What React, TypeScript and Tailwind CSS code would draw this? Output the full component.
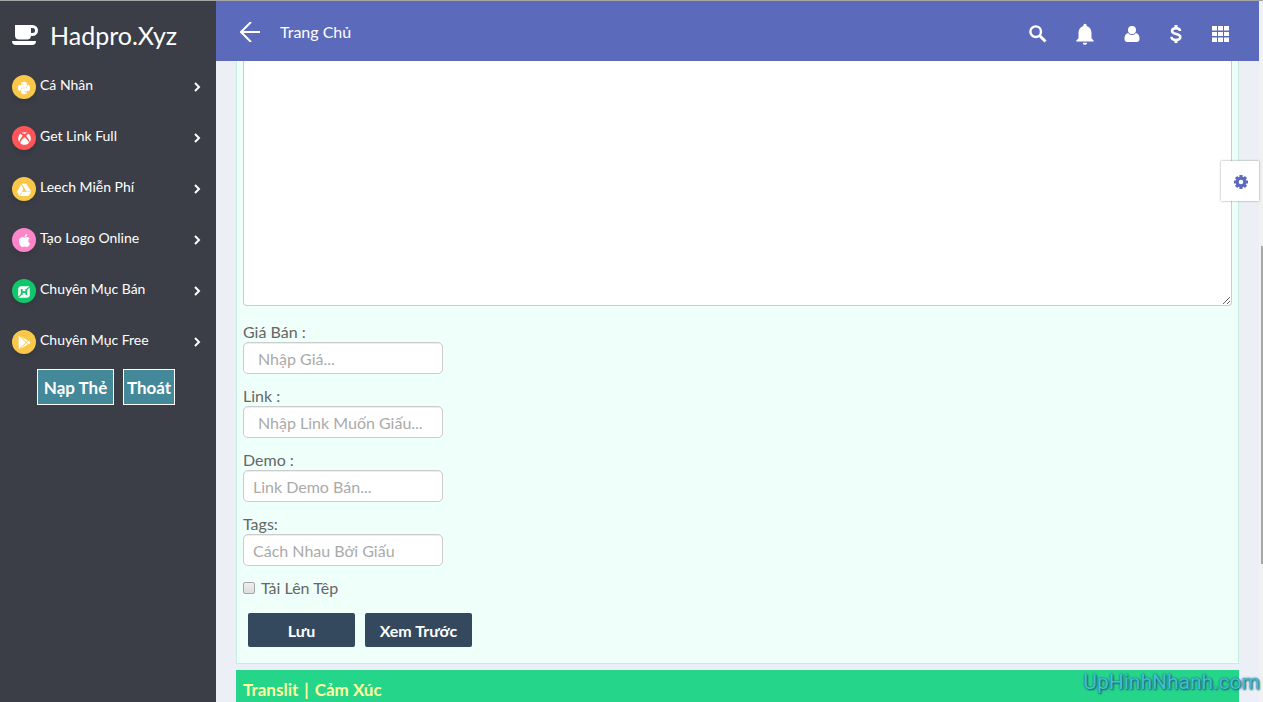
import React, { type ReactNode } from "react";
import { FaPython, FaXbox, FaApple, FaGooglePlay } from "react-icons/fa";
import { MdNotifications } from "react-icons/md";

function PanelIcon() {
  return (
    <svg viewBox="0 0 24 24" className="size-[14px]" fill="currentColor" aria-hidden="true">
      <path d="M7 2h15v14q0 6-6 6H2V8q0-6 5-6z" />
      <path d="M8 7v10M8 12h8M16 7v10" stroke="#12c66b" strokeWidth="3" fill="none" />
      <path d="M1 22 9 15M15 9l8-7" stroke="#12c66b" strokeWidth="2" />
    </svg>
  );
}

function DriveIcon() {
  return (
    <svg viewBox="0 0 24 22" className="h-[13px] w-[14px]" fill="currentColor" aria-hidden="true">
      <path d="M8 1h8l8 13h-8zM7 3l4 7-7 12-4-7zM9 15h15l-4 7H5z" />
    </svg>
  );
}

function CupIcon() {
  return (
    <svg viewBox="0 0 26 20" className="h-5 w-[26px]" fill="currentColor" aria-hidden="true">
      <path fillRule="evenodd" d="M3 0h17.500a5.500 5.500 0 0 1 0 11H19a4 4 0 0 1-4 3.500H7a4 4 0 0 1-4-4zM19 3v5h1.500a2.500 2.500 0 0 0 0-5z" />
      <path d="M0 16h24q0 4-4 4H4q-4 0-4-4z" />
    </svg>
  );
}

function GearIcon() {
  return (
    <svg viewBox="0 0 16 16" className="size-[14px]" fill="none" stroke="currentColor" aria-hidden="true">
      <circle cx="8" cy="8" r="4.400" strokeWidth="3.600" />
      <path d="M8 0v3M8 13v3M0 8h3M13 8h3M2.300 2.300l2.200 2.200M11.500 11.500l2.200 2.200M2.300 13.700l2.200-2.200M11.500 4.500l2.200-2.200" strokeWidth="3.600" />
    </svg>
  );
}

function SearchIcon() {
  return (
    <svg viewBox="0 0 18 18" className="size-[18px]" fill="none" stroke="currentColor" aria-hidden="true">
      <circle cx="6.700" cy="6.700" r="5.300" strokeWidth="2.400" />
      <path d="M10.500 10.500l6 6" strokeWidth="3" />
    </svg>
  );
}

function DollarIcon() {
  return (
    <svg viewBox="0 0 12 18" className="h-[18px] w-3" fill="none" stroke="currentColor" strokeWidth="2.500" aria-hidden="true">
      <path d="M10 6C10 4 8.500 3.200 6 3.200S2 4.200 2 6c0 4 8.300 2 8.300 6 0 1.900-1.800 2.900-4.300 2.900S1.500 14 1.500 11.700" />
      <path d="M6 0v3M6 15v3" strokeWidth="3" />
    </svg>
  );
}

function GridIcon() {
  return (
    <svg viewBox="0 0 17 16" className="h-4 w-[17px]" fill="currentColor" aria-hidden="true">
      <path d="M0 0h5v4.500H0zM6 0h5v4.500H6zM12 0h5v4.500h-5zM0 6h5v4H0zM6 6h5v4H6zM12 6h5v4h-5zM0 11.500h5V16H0zM6 11.500h5V16H6zM12 11.500h5V16h-5z" />
    </svg>
  );
}

const menu: { label: string; color: string; icon: ReactNode }[] = [
  { label: "Cá Nhân", color: "bg-[#f9c84b]", icon: <FaPython size={14} /> },
  { label: "Get Link Full", color: "bg-[#ff5559]", icon: <FaXbox size={13} /> },
  { label: "Leech Miễn Phí", color: "bg-[#f9c84b]", icon: <DriveIcon /> },
  { label: "Tạo Logo Online", color: "bg-[#ff85cb]", icon: <FaApple size={15} /> },
  { label: "Chuyên Mục Bán", color: "bg-[#12c66b]", icon: <PanelIcon /> },
  { label: "Chuyên Mục Free", color: "bg-[#f9c84b]", icon: <FaGooglePlay size={13} /> },
];

function Sidebar() {
  return (
    <aside className="w-[216px] shrink-0 bg-[#3c3e47] text-white">
      <a href="#" className="flex h-[60px] items-center gap-3 px-3 pt-2">
        <CupIcon />
        <span className="text-[25px] leading-8">Hadpro.Xyz</span>
      </a>
      <nav>
        {menu.map((item) => (
          <a key={item.label} href="#" className="flex h-[51px] items-center pr-[15px] pl-3">
            <span className={"flex size-6 items-center justify-center rounded-full pt-[2px] shadow-md " + item.color}>
              {item.icon}
            </span>
            <span className="ml-1 flex-1 pb-1 text-sm leading-5">{item.label}</span>
            <svg viewBox="0 0 8 10" className="h-[10px] w-2" fill="none" stroke="currentColor" strokeWidth="2" aria-hidden="true">
              <path d="M2 1l4 4-4 4" />
            </svg>
          </a>
        ))}
      </nav>
      <div className="flex gap-[9px] pt-[2px] pl-[37px] text-[17px] leading-6 font-bold">
        <button className="h-9 w-[77px] border border-white bg-[#438999] pt-[2px]">Nạp Thẻ</button>
        <button className="h-9 w-[52px] border border-white bg-[#438999] pt-[2px]">Thoát</button>
      </div>
    </aside>
  );
}

function Header() {
  return (
    <header className="flex h-[60px] shrink-0 items-center bg-[#5c6abc] pt-[2px] pr-[27px] pl-6 text-white">
      <button aria-label="Back">
        <svg viewBox="0 0 20 20" className="size-5" fill="none" stroke="currentColor" strokeWidth="2" aria-hidden="true">
          <path d="M11 0 1 10l10 10M1 10h19" />
        </svg>
      </button>
      <a href="#" className="ml-5 flex-1 text-base leading-6">Trang Chủ</a>
      <div className="flex items-center gap-[22px] pt-1">
        <button aria-label="Search" className="flex w-6 justify-center"><SearchIcon /></button>
        <button aria-label="Notifications"><MdNotifications size={26} /></button>
        <button aria-label="Account" className="flex w-6 justify-center">
          <svg viewBox="0 0 16 16" className="size-4" fill="currentColor" aria-hidden="true">
            <path d="M4 7C1 8 .5 10 .5 13q0 3 3 3h9q3 0 3-3c0-3-.5-5-3.500-6a5 5 0 0 1-8 0z" />
            <circle cx="8" cy="4" r="4" />
          </svg>
        </button>
        <button aria-label="Balance" className="flex w-5 justify-center"><DollarIcon /></button>
        <button aria-label="Apps" className="flex w-6 justify-center"><GridIcon /></button>
      </div>
    </header>
  );
}

const fields = [
  { id: "price", label: "Giá Bán :", placeholder: "Nhập Giá...", pad: "pl-[14px]" },
  { id: "link", label: "Link :", placeholder: "Nhập Link Muốn Giấu...", pad: "pl-[14px]" },
  { id: "demo", label: "Demo :", placeholder: "Link Demo Bán...", pad: "pl-[9px]" },
  { id: "tags", label: "Tags:", placeholder: "Cách Nhau Bởi Giấu", pad: "pl-[9px]" },
];

function PostForm() {
  return (
    <form className="border border-t-0 border-[#c5eee0] bg-[#effffa] px-[6px] pb-4 text-[#666]">
      <textarea
        aria-label="Content"
        className="block h-[245px] w-full rounded-b-[4px] border border-t-0 border-[#ccc] bg-white"
      />
      <div className="flex flex-col gap-3 pt-4">
        {fields.map((f) => (
          <div key={f.id}>
            <label htmlFor={f.id} className="block h-5 text-base leading-5">{f.label}</label>
            <input
              id={f.id}
              type="text"
              placeholder={f.placeholder}
              className={"block h-8 w-[200px] rounded-[5px] border border-[#ccc] bg-white text-base shadow-[inset_0_1px_1px_#00000013] placeholder:text-[#aaa] " + f.pad}
            />
          </div>
        ))}
      </div>
      <label className="mt-3 flex h-5 items-center gap-[6px] text-base leading-5">
        <input
          type="checkbox"
          className="size-3 appearance-none rounded-[2px] border border-[#a6a6a6] bg-linear-to-b from-[#eee] to-[#ddd] checked:bg-[#34495e]"
        />
        Tải Lên Têp
      </label>
      <div className="mt-[15px] flex gap-[10px] pl-[5px] text-base font-bold text-white">
        <button type="button" className="h-[34px] w-[107px] rounded-[2px] bg-[#34495e] pt-[2px]">Lưu</button>
        <button type="button" className="h-[34px] w-[107px] rounded-[2px] bg-[#34495e] pt-[2px]">Xem Trước</button>
      </div>
    </form>
  );
}

export default function App() {
  return (
    <div className="relative flex h-screen overflow-hidden border-t border-[#a5a5a5] bg-[#eceff5] font-[Lato,sans-serif]">
      <Sidebar />
      <div className="flex min-w-0 flex-1 flex-col">
        <Header />
        <main className="flex-1 pr-5 pl-5">
          <PostForm />
          <div className="mt-[6px] flex h-14 gap-[6px] bg-[#25d58a] px-[7px] pt-2 text-[17px] leading-6 font-bold text-[#ffff9e]">
            <a href="#">Translit</a>
            <span>|</span>
            <a href="#">Cảm Xúc</a>
          </div>
        </main>
      </div>
      <div className="w-1 shrink-0 bg-[#f1f1f1] pt-[245px]">
        <div className="ml-auto h-[318px] w-[2px] bg-[#a8a8a8]" />
      </div>
      <button
        aria-label="Settings"
        className="absolute top-40 right-1 flex h-10 w-[38px] items-center justify-center bg-white pt-[2px] pl-[2px] text-[#5c6abc] shadow-[0_0_2px_#00000066]"
      >
        <GearIcon />
      </button>
      <div className="absolute right-[3px] bottom-2 font-[Roboto,sans-serif] text-[21px] leading-6 text-[#49bcd0] [text-shadow:0_0_2px_#126078,1px_1px_2px_#126078]">
        UpHinhNhanh.com
      </div>
    </div>
  );
}
